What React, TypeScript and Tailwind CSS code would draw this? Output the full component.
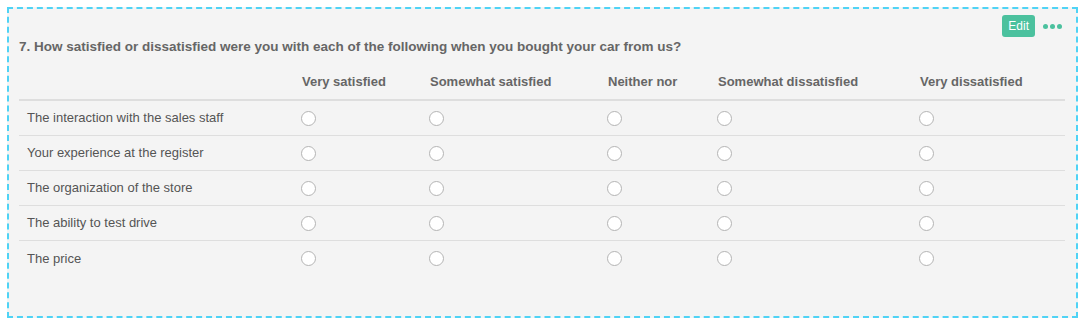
import React from "react";

const cols = ["Very satisfied", "Somewhat satisfied", "Neither nor", "Somewhat dissatisfied", "Very dissatisfied"];
const rows = [
  "The interaction with the sales staff",
  "Your experience at the register",
  "The organization of the store",
  "The ability to test drive",
  "The price",
];

const grid = "grid grid-cols-[275px_128px_178px_110px_202px_1fr]";

function Radio() {
  return <span className="block w-[15px] h-[15px] rounded-full border border-[#b4b4b4] bg-white" />;
}

export default function App() {
  return (
    <div className="w-[1086px] h-[329px] bg-white pt-[7px] pl-[7px]" style={{ fontFamily: '"Helvetica Neue", "Liberation Sans", Arial, sans-serif' }}>
      <div className="w-[1071px] h-[311px] border-2 border-dashed border-[#4fd3f5] bg-[#f4f4f4] pl-[10px] pr-[11px]">
        <div className="flex justify-end items-center mt-[6px] h-[22px]">
          <div className="h-[22px] px-[6px] rounded-[3px] bg-[#4bc19e] text-white text-[12px] leading-[22px]">Edit</div>
          <div className="flex gap-[2px] ml-[8px] mr-[3px]">
            <span className="w-[5px] h-[5px] rounded-full bg-[#4bc19e]" />
            <span className="w-[5px] h-[5px] rounded-full bg-[#4bc19e]" />
            <span className="w-[5px] h-[5px] rounded-full bg-[#4bc19e]" />
          </div>
        </div>
        <div className="text-[13.5px] leading-[20px] font-bold text-[#666]">
          7. How satisfied or dissatisfied were you with each of the following when you bought your car from us?
        </div>
        <div className={`${grid} mt-[16px] pb-[8px] border-b-2 border-[#dedede] text-[13px] leading-[18px] font-bold text-[#666]`}>
          <div />
          {cols.map((c) => (
            <div key={c} className="pl-[8px]">{c}</div>
          ))}
        </div>
        {rows.map((r, i) => (
          <div key={r} className={`${grid} h-[35px] items-center text-[13px] text-[#555] ${i < rows.length - 1 ? "border-b border-[#dedede]" : ""}`}>
            <div className="pl-[8px]">{r}</div>
            {cols.map((c) => (
              <div key={c} className="pl-[7px]"><Radio /></div>
            ))}
          </div>
        ))}
      </div>
    </div>
  );
}
